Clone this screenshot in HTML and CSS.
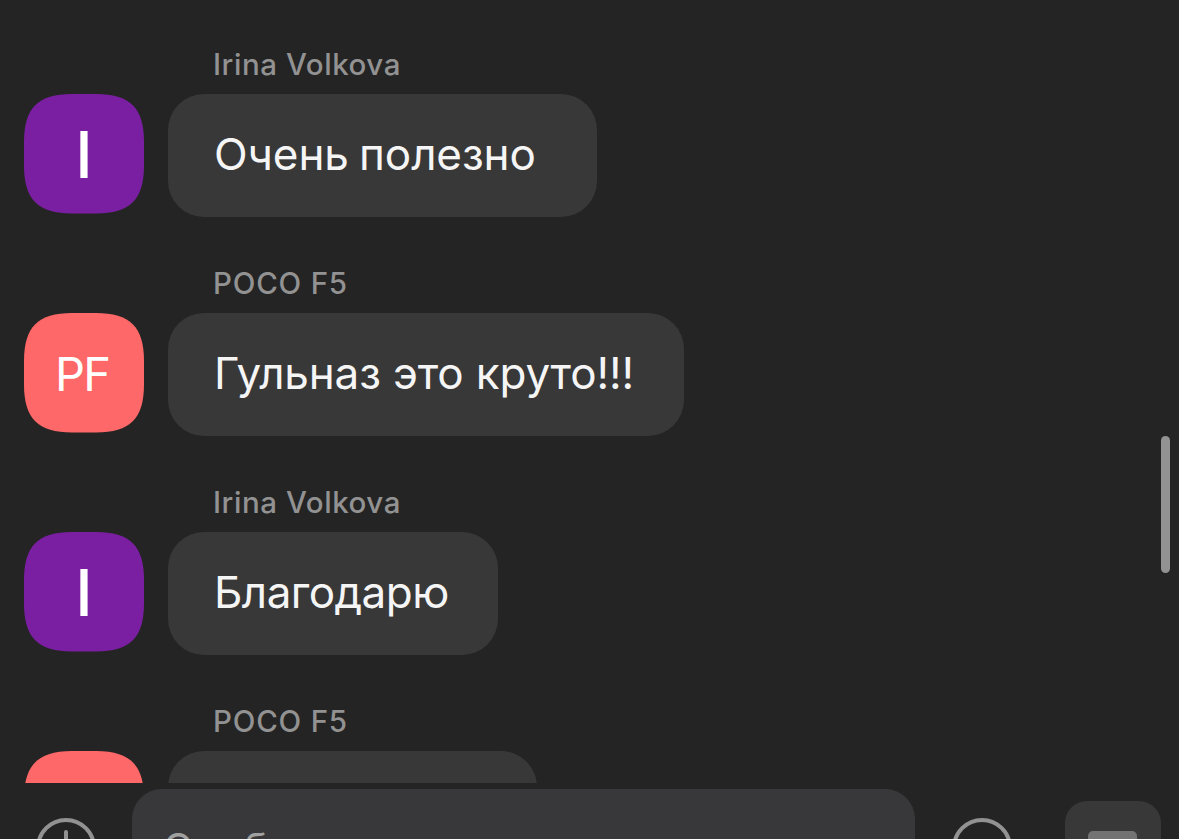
FILE: index.html
```
<!DOCTYPE html>
<html lang="ru">
<head>
    <meta charset="utf-8">
    <title>Chat</title>
    <link rel="stylesheet" href="styles.css">
</head>
<body>
    <div class="chat">
        <div class="message">
            <div class="avatar purple">I</div>
            <div class="content">
                <div class="name irina">Irina Volkova</div>
                <div class="bubble useful">Очень полезно</div>
            </div>
        </div>
        <div class="message">
            <div class="avatar coral">PF</div>
            <div class="content">
                <div class="name poco">POCO F5</div>
                <div class="bubble cool">Гульназ это круто!!!</div>
            </div>
        </div>
        <div class="message">
            <div class="avatar purple">I</div>
            <div class="content">
                <div class="name irina">Irina Volkova</div>
                <div class="bubble thanks">Благодарю</div>
            </div>
        </div>
        <div class="message">
            <div class="avatar coral"></div>
            <div class="content">
                <div class="name poco">POCO F5</div>
                <div class="bubble last"></div>
            </div>
        </div>
        <div class="scrollbar"></div>
    </div>

    <div class="composer">
        <svg class="icon plus" width="60" height="60" viewBox="0 0 60 60">
            <circle cx="30" cy="30" r="28"/>
            <path d="M30 14V46M14 30H46"/>
        </svg>
        <div class="input">Сообщение</div>
        <svg class="icon smile" width="60" height="60" viewBox="0 0 60 60">
            <circle cx="30" cy="30" r="28"/>
        </svg>
        <div class="keyboard"><div class="bar"></div></div>
    </div>
</body>
</html>
```
FILE: styles.css
```
body {
    background-color: #242424;
    color: #f5f5f5;
    font-family: Inter, "Liberation Sans", sans-serif;
    height: 839px;
    margin: 0;
    overflow: hidden;
}
.chat {
    position: relative;
    box-sizing: border-box;
    height: 783px;
    padding: 44px 24px 0;
    overflow: hidden;
}
.message {
    display: flex;
    gap: 24px;
    height: 219px;
}
.avatar {
    width: 120px;
    height: 120px;
    margin-top: 50px;
    line-height: 121px;
    text-align: center;
    color: white;
    clip-path: path("M0 48C0 14 14 0 48 0H72C106 0 120 14 120 48V71.4C120 105.4 106 119.4 72 119.4H48C14 119.4 0 105.4 0 71.4Z");
}
.purple {
    background-color: #7b1fa2;
    font-size: 64px;
    font-weight: 500;
}
.coral {
    background-color: #ff6868;
    font-size: 47px;
    letter-spacing: -2px;
    text-indent: -4px;
}
.name {
    height: 50px;
    padding-left: 45px;
    line-height: 41px;
    font-size: 29.5px;
    font-weight: 500;
    color: #929292;
    white-space: nowrap;
}
.irina {
    letter-spacing: 0.55px;
}
.poco {
    letter-spacing: 0.8px;
}
.bubble {
    box-sizing: border-box;
    height: 123px;
    padding-left: 46px;
    border-radius: 36px;
    background-color: #383838;
    line-height: 121px;
    font-size: 44px;
    white-space: nowrap;
}
.useful {
    width: 429px;
    letter-spacing: -0.1px;
    word-spacing: -2px;
}
.cool {
    width: 516px;
    letter-spacing: -0.15px;
}
.thanks {
    width: 330px;
    letter-spacing: -0.55px;
}
.last {
    width: 369px;
}
.scrollbar {
    position: absolute;
    top: 436px;
    right: 9px;
    width: 9px;
    height: 137px;
    border-radius: 5px;
    background-color: #929292;
}
.composer {
    display: flex;
    align-items: flex-start;
    height: 50px;
    padding: 6px 18px 0 36px;
    overflow: hidden;
}
.icon {
    flex: none;
    fill: none;
    stroke: #929292;
    stroke-width: 4;
    stroke-linecap: round;
    margin-top: 29px;
}
.input {
    box-sizing: border-box;
    width: 783px;
    height: 96px;
    margin: 0 37px 0 36px;
    padding-left: 31px;
    border-radius: 30px;
    background-color: #38383a;
    color: #a0a0a0;
    font-size: 40px;
    letter-spacing: 1.2px;
    line-height: 118px;
}
.keyboard {
    width: 96px;
    height: 96px;
    margin: 12px 0 0 53px;
    border-radius: 22px;
    background-color: #383838;
}
.bar {
    width: 49px;
    height: 12px;
    margin: 30px 0 0 23px;
    border-radius: 5px;
    background-color: #737373;
}
```
